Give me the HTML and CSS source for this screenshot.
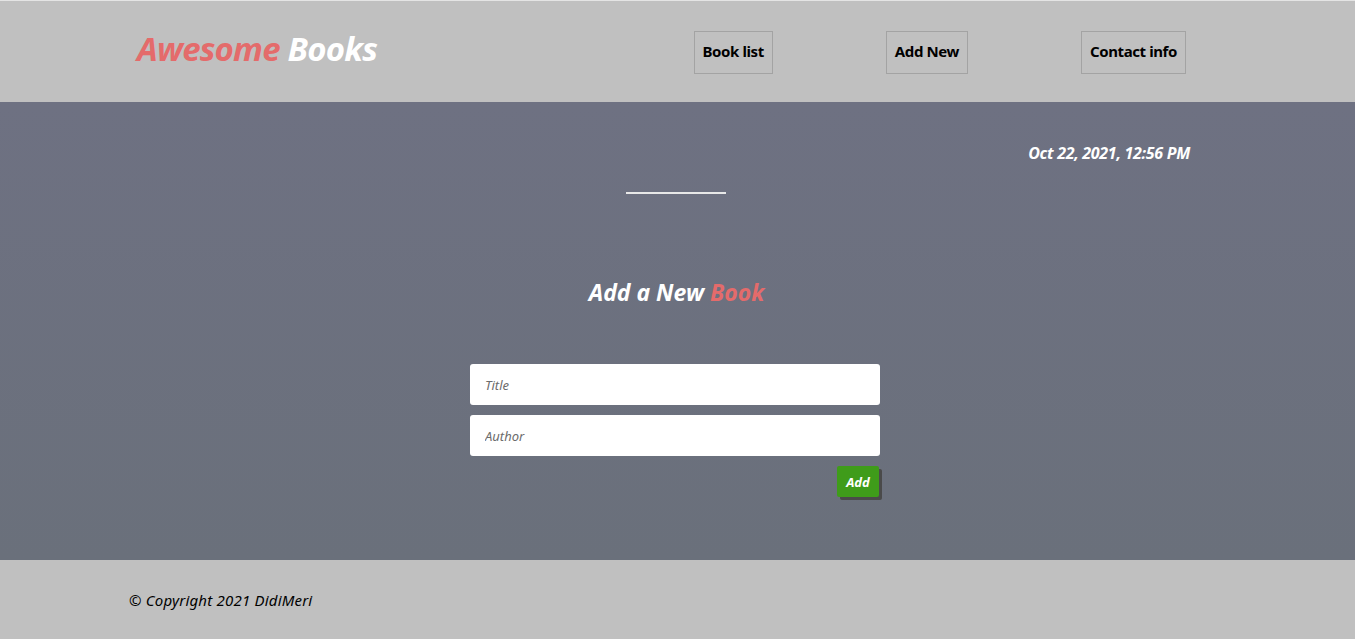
FILE: index.html
```html
<!DOCTYPE html>
<html lang="en">
<head>
<meta charset="utf-8">
<title>Awesome Books</title>
<link rel="stylesheet" href="styles.css">
</head>
<body>
<header class="header">
  <h1 class="logo"><span class="red">Awesome</span> Books</h1>
  <nav class="nav">
    <a class="nav-link" href="#">Book list</a>
    <a class="nav-link" href="#">Add New</a>
    <a class="nav-link" href="#">Contact info</a>
  </nav>
</header>
<main class="main">
  <div class="date-row"><span class="date">Oct 22, 2021, 12:56 PM</span></div>
  <hr class="divider">
  <h2 class="title">Add a New <span class="red">Book</span></h2>
  <form class="form">
    <input class="field" type="text" placeholder="Title">
    <input class="field" type="text" placeholder="Author">
    <div class="actions"><button class="add-btn" type="button">Add</button></div>
  </form>
</main>
<footer class="footer">
  <p class="copy">© Copyright 2021 DidiMeri</p>
</footer>
</body>
</html>
```
FILE: styles.css
```css
* { box-sizing: border-box; }
html, body { margin: 0; padding: 0; }
body {
  font-family: "Noto Sans", "DejaVu Sans", sans-serif;
  background: #c0c0c0;
  height: 639px;
  display: flex;
  flex-direction: column;
}
.red { color: #e46b6b; }
.header {
  height: 102px;
  border-top: 1px solid #e4e4e4;
  background: #c0c0c0;
  display: flex;
  align-items: center;
  justify-content: space-between;
  padding: 0 169px 0 137px;
}
.logo {
  margin: 0 0 6px 0;
  font-size: 33px;
  font-weight: 700;
  font-style: italic;
  color: #fff;
  letter-spacing: -0.8px;
}
.nav { display: flex; gap: 113px; margin-top: 2px; }
.nav-link {
  display: flex;
  align-items: center;
  height: 43px;
  padding: 0 8px 3px 8px;
  border: 1px solid #a3a3a3;
  color: #000;
  text-decoration: none;
  font-weight: 700;
  font-size: 15px;
  letter-spacing: -0.4px;
}
.main {
  height: 458px;
  background: linear-gradient(#6e7182, #6a707b);
  display: flex;
  flex-direction: column;
  align-items: center;
  padding-top: 40px;
}
.date-row {
  width: 100%;
  display: flex;
  justify-content: flex-end;
  padding-right: 165px;
}
.date {
  color: #fff;
  font-weight: 700;
  font-style: italic;
  font-size: 16px;
  letter-spacing: -0.3px;
}
.divider {
  width: 100px;
  margin: 28px 4px 0 0;
  border: 0;
  border-top: 2px solid #e8e8e8;
}
.title {
  margin: 82px 2px 0 0;
  color: #fff;
  font-size: 23px;
  font-weight: 700;
  font-style: italic;
  line-height: 32px;
}
.form {
  width: 410px;
  margin: 56px 5px 0 0;
  display: flex;
  flex-direction: column;
  gap: 10px;
}
.field {
  height: 41px;
  border: 0;
  border-radius: 3px;
  padding: 0 15px;
  font-family: inherit;
  font-size: 13px;
  font-style: italic;
  background: #fff;
}
.field::placeholder { color: #6c6c6c; }
.actions { display: flex; justify-content: flex-end; }
.add-btn {
  width: 42px;
  height: 31px;
  border: 0;
  border-radius: 2px;
  background: #3f9c1a;
  color: #fff;
  font-family: inherit;
  font-weight: 700;
  font-style: italic;
  font-size: 13px;
  box-shadow: 3px 3px 0 #4a4a4a;
  padding: 0;
  margin-right: 1px;
}
.footer {
  flex: 1;
  background: #c0c0c0;
  display: flex;
  align-items: center;
  padding-left: 129px;
}
.copy {
  margin: 0;
  font-size: 15px;
  font-style: italic;
  color: #000;
  letter-spacing: 0.2px;
}
```
